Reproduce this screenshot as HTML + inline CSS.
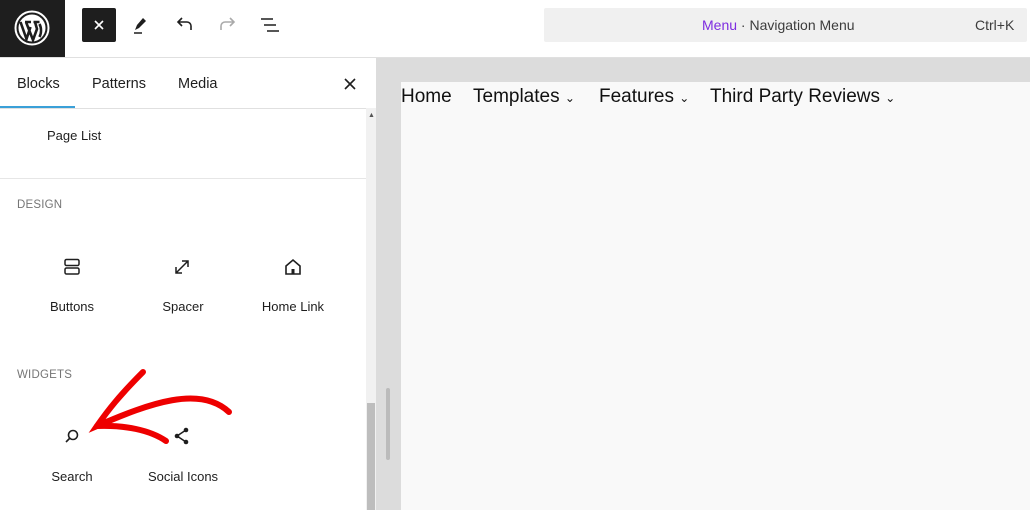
<!DOCTYPE html>
<html><head><meta charset="utf-8"><style>
*{box-sizing:border-box;margin:0;padding:0}
body{width:1030px;height:510px;overflow:hidden;background:#fff;font-family:"Liberation Sans",sans-serif;position:relative;color:#1e1e1e}
.abs{position:absolute}
.lbl{position:absolute;font-size:13px;color:#1e1e1e;text-align:center;width:110px}
.cap{position:absolute;font-size:11.5px;color:#757575;left:17px;letter-spacing:.2px}
.nav{position:absolute;top:86px;font-size:19px;color:#111;white-space:nowrap}
.nav small{font-size:12px}
svg{position:absolute}
</style></head><body>
<!-- top bar -->
<div class="abs" style="left:0;top:0;width:65px;height:57px;background:#1e1e1e"></div>
<svg style="left:14px;top:10px" width="36" height="36" viewBox="0 0 36 36"><circle cx="18" cy="18" r="16.5" fill="none" stroke="#fff" stroke-width="2"/><circle cx="18" cy="18" r="13.5" fill="#fff"/><path d="M6.5 12 L12.5 29 L16.5 17 M11 12h6 M12 12 L19 30 L23 19 L21 12 M19.5 12h6 M25.5 14c2 4 2 9-0 13" fill="none" stroke="#1e1e1e" stroke-width="2.6"/></svg>
<div class="abs" style="left:82px;top:8px;width:34px;height:34px;background:#1e1e1e;border-radius:2px"></div>
<svg style="left:91px;top:17px" width="16" height="16"><path d="M4 4l8 8M12 4l-8 8" stroke="#fff" stroke-width="1.6"/></svg>
<svg style="left:130px;top:14px" width="22" height="22"><path d="M5 16l2-5 6-7 3 3-7 7z" fill="#1e1e1e"/><path d="M4 19h8" stroke="#1e1e1e" stroke-width="1.5"/></svg>
<svg style="left:173px;top:14px" width="22" height="22"><path d="M5 8h9a4 4 0 0 1 4 4v4M9 4L5 8l4 4" fill="none" stroke="#1e1e1e" stroke-width="1.6"/></svg>
<svg style="left:217px;top:14px" width="22" height="22"><path d="M17 8H8a4 4 0 0 0-4 4v4M13 4l4 4-4 4" fill="none" stroke="#aaa" stroke-width="1.6"/></svg>
<svg style="left:259px;top:14px" width="22" height="22"><path d="M2 5h12M5 11h12M8 17h12" stroke="#1e1e1e" stroke-width="1.6"/></svg>
<div class="abs" style="left:544px;top:8px;width:483px;height:34px;background:#f0f0f0;border-radius:2px"></div>
<div class="abs" style="left:702px;top:17px;font-size:14px;color:#3c3c3c"><span style="color:#7e2de0">Menu</span> · Navigation Menu</div>
<div class="abs" style="left:975px;top:17px;font-size:14px;color:#3c3c3c">Ctrl+K</div>
<div class="abs" style="left:0;top:57px;width:1030px;height:1px;background:#e0e0e0"></div>
<!-- sidebar -->
<div class="abs" style="left:17px;top:76px;font-size:14.5px;font-weight:500">Blocks</div>
<div class="abs" style="left:92px;top:76px;font-size:14.5px">Patterns</div>
<div class="abs" style="left:178px;top:76px;font-size:14.5px">Media</div>
<svg style="left:342px;top:76px" width="16" height="16"><path d="M3 3l10 10M13 3L3 13" stroke="#1e1e1e" stroke-width="1.6"/></svg>
<div class="abs" style="left:0;top:108px;width:366px;height:1px;background:#e0e0e0"></div>
<div class="abs" style="left:0;top:106px;width:75px;height:2px;background:#3aa0d8"></div>
<div class="abs" style="left:47px;top:128px;font-size:13px">Page List</div>
<div class="abs" style="left:0;top:178px;width:366px;height:1px;background:#e6e6e6"></div>
<div class="cap" style="top:199px">DESIGN</div>
<svg style="left:62px;top:257px" width="20" height="20"><rect x="3" y="2.5" width="14" height="6" rx="1.5" fill="none" stroke="#1e1e1e" stroke-width="1.5"/><rect x="3" y="11" width="14" height="6" rx="1.5" fill="none" stroke="#1e1e1e" stroke-width="1.5"/></svg>
<svg style="left:172px;top:257px" width="20" height="20"><path d="M4 16L16 4M10 4h6v6M4 10v6h6" fill="none" stroke="#1e1e1e" stroke-width="1.5"/></svg>
<svg style="left:283px;top:257px" width="20" height="20"><path d="M3 9l7-6 7 6v8H3z" fill="none" stroke="#1e1e1e" stroke-width="1.6"/><rect x="8.5" y="12" width="3" height="5" fill="#1e1e1e"/></svg>
<div class="lbl" style="left:17px;top:299px">Buttons</div>
<div class="lbl" style="left:128px;top:299px">Spacer</div>
<div class="lbl" style="left:238px;top:299px">Home Link</div>
<div class="cap" style="top:369px">WIDGETS</div>
<svg style="left:62px;top:426px" width="20" height="20"><circle cx="11" cy="9" r="4.5" fill="none" stroke="#1e1e1e" stroke-width="1.6"/><path d="M8 12l-4 4" stroke="#1e1e1e" stroke-width="1.6"/></svg>
<svg style="left:172px;top:426px" width="20" height="20"><path d="M14 4L5 10l9 6" fill="none" stroke="#1e1e1e" stroke-width="1.5"/><circle cx="14" cy="4" r="2.3" fill="#1e1e1e"/><circle cx="5" cy="10" r="2.3" fill="#1e1e1e"/><circle cx="14" cy="16" r="2.3" fill="#1e1e1e"/></svg>
<div class="lbl" style="left:17px;top:469px">Search</div>
<div class="lbl" style="left:128px;top:469px">Social Icons</div>
<!-- red arrow -->
<svg style="left:0;top:0" width="400" height="510"><path d="M143 372 C120 395 108 410 97 426 C150 403 200 385 229 412" fill="none" stroke="#ee0000" stroke-width="6" stroke-linecap="round"/><path d="M97 426 C125 425 150 430 166 441" fill="none" stroke="#ee0000" stroke-width="6" stroke-linecap="round"/></svg>
<!-- scrollbars -->
<div class="abs" style="left:366px;top:108px;width:10px;height:402px;background:#f1f1f1"></div>
<div class="abs" style="left:367px;top:403px;width:8px;height:107px;background:#bdbdbd"></div>
<div class="abs" style="left:368px;top:112px;font-size:7px;color:#555">▲</div>
<!-- canvas -->
<div class="abs" style="left:376px;top:58px;width:654px;height:452px;background:#dcdcdc"></div>
<div class="abs" style="left:386px;top:388px;width:4px;height:72px;background:#bbb;border-radius:2px"></div>
<div class="abs" style="left:401px;top:82px;width:629px;height:428px;background:#f9f9f9"></div>
<div class="nav" style="left:401px">Home</div>
<div class="nav" style="left:473px">Templates <small>⌄</small></div>
<div class="nav" style="left:599px">Features <small>⌄</small></div>
<div class="nav" style="left:710px">Third Party Reviews <small>⌄</small></div>
</body></html>
